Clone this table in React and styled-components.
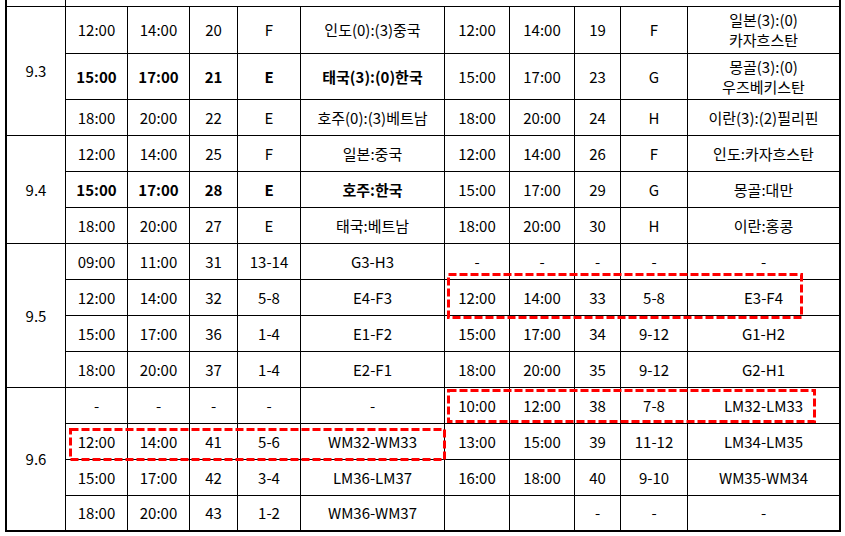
import React from 'react';
import styled, { createGlobalStyle, css } from 'styled-components';

const Global = createGlobalStyle`
  html, body { margin: 0; padding: 0; background: #fff; }
  body { font-family: "Noto Sans CJK KR", "Noto Sans", sans-serif; }
  *, *::before, *::after { box-sizing: border-box; }
`;

const Page = styled.div`
  position: relative;
  width: 845px;
  height: 536px;
  overflow: hidden;
  padding-left: 5px;
  background: #fff;
`;

const Table = styled.table`
  border-collapse: separate;
  border-spacing: 0;
  table-layout: fixed;
  width: 836px;
  border: 2px solid #000;
  border-top: none;
  font-size: 15px;
  color: #000;
`;

const Cell = styled.td`
  padding: 0;
  text-align: center;
  vertical-align: middle;
  border-right: 1px solid #000;
  border-bottom: 1px solid #000;
  line-height: 20px;
  white-space: pre-line;
  font-weight: ${(p) => (p.$bold ? 700 : 400)};
  ${(p) => p.$h && css`height: ${p.$h}px;`}
  &:last-child { border-right: none; }
  ${(p) => p.$last && css`border-bottom: none;`}
`;

const Mark = styled.svg`
  position: absolute;
  left: ${(p) => p.$x}px;
  top: ${(p) => p.$y}px;
  overflow: visible;
  pointer-events: none;
`;

function DashedMark({ x, y, w, h }) {
  return (
    <Mark $x={x} $y={y} width={w} height={h}>
      <rect x="1.5" y="1.5" width={w - 3} height={h - 3} fill="none" stroke="#ff0000" strokeWidth="3" strokeDasharray="8 3" />
    </Mark>
  );
}

const colWidths = [59, 62, 62, 48, 63, 144, 65, 65, 46, 67, 151];

const days = [
  {
    date: '9.3',
    rows: [
      { h: 47, l: ['12:00', '14:00', '20', 'F', '인도(0):(3)중국'], r: ['12:00', '14:00', '19', 'F', '일본(3):(0)\n카자흐스탄'] },
      { h: 46, bold: true, l: ['15:00', '17:00', '21', 'E', '태국(3):(0)한국'], r: ['15:00', '17:00', '23', 'G', '몽골(3):(0)\n우즈베키스탄'] },
      { h: 36, l: ['18:00', '20:00', '22', 'E', '호주(0):(3)베트남'], r: ['18:00', '20:00', '24', 'H', '이란(3):(2)필리핀'] },
    ],
  },
  {
    date: '9.4',
    rows: [
      { h: 36, l: ['12:00', '14:00', '25', 'F', '일본:중국'], r: ['12:00', '14:00', '26', 'F', '인도:카자흐스탄'] },
      { h: 36, bold: true, l: ['15:00', '17:00', '28', 'E', '호주:한국'], r: ['15:00', '17:00', '29', 'G', '몽골:대만'] },
      { h: 36, l: ['18:00', '20:00', '27', 'E', '태국:베트남'], r: ['18:00', '20:00', '30', 'H', '이란:홍콩'] },
    ],
  },
  {
    date: '9.5',
    rows: [
      { h: 36, l: ['09:00', '11:00', '31', '13-14', 'G3-H3'], r: ['-', '-', '-', '-', '-'] },
      { h: 36, l: ['12:00', '14:00', '32', '5-8', 'E4-F3'], r: ['12:00', '14:00', '33', '5-8', 'E3-F4'] },
      { h: 36, l: ['15:00', '17:00', '36', '1-4', 'E1-F2'], r: ['15:00', '17:00', '34', '9-12', 'G1-H2'] },
      { h: 36, l: ['18:00', '20:00', '37', '1-4', 'E2-F1'], r: ['18:00', '20:00', '35', '9-12', 'G2-H1'] },
    ],
  },
  {
    date: '9.6',
    last: true,
    rows: [
      { h: 36, l: ['-', '-', '-', '-', '-'], r: ['10:00', '12:00', '38', '7-8', 'LM32-LM33'] },
      { h: 36, l: ['12:00', '14:00', '41', '5-6', 'WM32-WM33'], r: ['13:00', '15:00', '39', '11-12', 'LM34-LM35'] },
      { h: 36, l: ['15:00', '17:00', '42', '3-4', 'LM36-LM37'], r: ['16:00', '18:00', '40', '9-10', 'WM35-WM34'] },
      { h: 34, l: ['18:00', '20:00', '43', '1-2', 'WM36-WM37'], r: ['', '', '-', '-', '-'] },
    ],
  },
];

export default function App() {
  return (
    <>
      <Global />
      <Page>
        <Table>
          <colgroup>
            {colWidths.map((w, i) => (
              <col key={i} style={{ width: w }} />
            ))}
          </colgroup>
          <tbody>
            <tr>
              <Cell $h={7} />
              <Cell $h={7} colSpan={10} />
            </tr>
            {days.map((day) =>
              day.rows.map((row, ri) => {
                const isLast = day.last && ri === day.rows.length - 1;
                return (
                  <tr key={day.date + ri}>
                    {ri === 0 && (
                      <Cell rowSpan={day.rows.length} $last={day.last}>
                        {day.date}
                      </Cell>
                    )}
                    {row.l.map((t, i) => (
                      <Cell key={'l' + i} $h={row.h} $bold={row.bold} $last={isLast}>
                        {t}
                      </Cell>
                    ))}
                    {row.r.map((t, i) => (
                      <Cell key={'r' + i} $h={row.h} $last={isLast}>
                        {t}
                      </Cell>
                    ))}
                  </tr>
                );
              })
            )}
          </tbody>
        </Table>
        <DashedMark x={447} y={273} w={356} h={46} />
        <DashedMark x={447} y={389} w={369} h={34} />
        <DashedMark x={69} y={428} w={377} h={33} />
      </Page>
    </>
  );
}
